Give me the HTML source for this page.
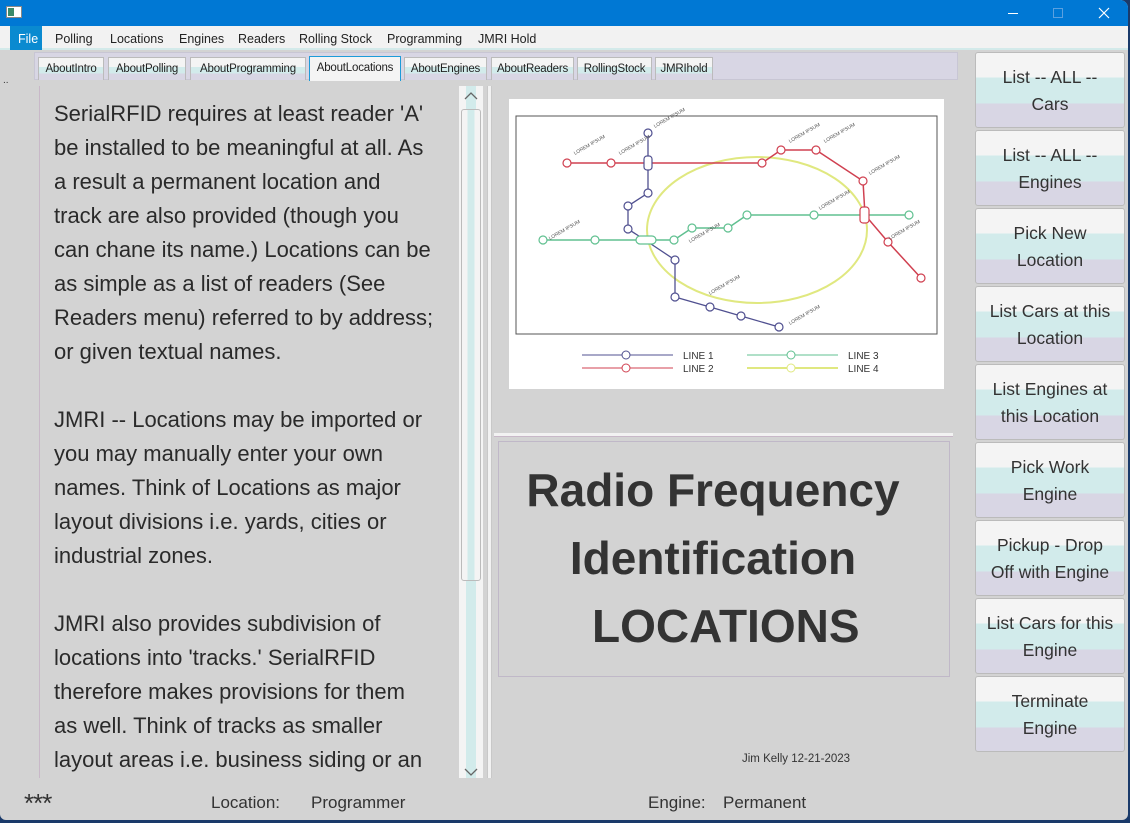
<!DOCTYPE html>
<html><head><meta charset="utf-8"><style>
*{margin:0;padding:0;box-sizing:border-box}
body{width:1130px;height:823px;overflow:hidden;background:#1a3a6a;font-family:"Liberation Sans",sans-serif;position:relative}
.win{position:absolute;left:0;top:0;width:1128px;height:820px;background:#d3d3d3;border-radius:0 8px 6px 6px;overflow:hidden}
.title{position:absolute;left:0;top:0;width:1130px;height:26px;background:#0078d4}
.menu{position:absolute;left:0;top:26px;width:1130px;height:24px;background:#f2f2f2;border-bottom:2px solid #d3eaea;font-size:12.5px;color:#222}
.menu span{position:absolute;top:6px}
.file{position:absolute;left:10px;top:0;width:32px;height:24px;background:#0a8ad0;color:#fff;font-size:12.5px;padding:6px 0 0 8px}
.tabs{position:absolute;left:34px;top:52px;width:924px;height:28px;background:#d8d6e4;border:1px solid #c8c6d4}
.tab{position:absolute;top:4px;height:23px;border:1px solid #bbb;border-bottom:none;background:linear-gradient(#f4f4f4 0,#f4f4f4 40%,#d2ebeb 40%,#d2ebeb 70%,#d8d6e4 70%);font-size:11.5px;letter-spacing:-0.2px;color:#222;padding:5px 0 0 0;text-align:center;white-space:nowrap;overflow:hidden}
.tab.sel{background:#f4f4f4;border:1px solid #1d9bd8;border-bottom:none;height:25px}
.txt{position:absolute;left:39px;top:86px;width:420px;height:692px;border-left:1px solid #c8b8c8;overflow:hidden}
.txt p{position:absolute;left:14px;top:11px;font-size:22px;line-height:34px;color:#2a2a2a;white-space:nowrap}
.sb{position:absolute;left:459px;top:86px;width:24px;height:692px;background:linear-gradient(90deg,#f4f4f4 0,#f4f4f4 30%,#d2ebeb 30%,#d2ebeb 70%,#f4f4f4 70%)}
.thumb{position:absolute;left:2px;top:23px;width:20px;height:472px;border:1px solid #bbb;border-radius:3px;background:linear-gradient(90deg,#f4f4f4 0,#f4f4f4 30%,#d2ebeb 30%,#d2ebeb 70%,#f4f4f4 70%)}
.btn{position:absolute;left:975px;width:150px;height:76px;border:1px solid #bbb;border-radius:3px;background:linear-gradient(#f4f4f4 0,#f4f4f4 33%,#d2ebeb 33%,#d2ebeb 68%,#d8d6e4 68%);font-size:17.5px;line-height:27px;color:#333;text-align:center;padding-top:11px}
.big{position:absolute;left:498px;top:441px;width:452px;height:236px;border:1px solid #c0b8c8;text-align:center;font-weight:bold;font-size:46px;line-height:68px;color:#333;padding-top:14px;padding-right:22px}
.st{position:absolute;top:793px;font-size:17px;color:#333}
</style></head><body>
<div class="win">
<div class="title">
<svg style="position:absolute;left:6px;top:6px" width="16" height="12"><rect x="0.5" y="0.5" width="15" height="11" fill="#fff" stroke="#888"/><rect x="2" y="2" width="6" height="8" fill="#3a8a6a"/></svg>
<div style="position:absolute;left:1008px;top:13px;width:10px;height:1px;background:#fff"></div>
<div style="position:absolute;left:1053px;top:8px;width:10px;height:10px;border:1px solid #5aa0e0"></div>
<svg style="position:absolute;left:1098px;top:7px" width="12" height="12"><path d="M1 1L11 11M11 1L1 11" stroke="#fff" stroke-width="1.2"/></svg>
</div>
<div class="menu"><div class="file">File</div>
<span style="left:55px">Polling</span><span style="left:110px">Locations</span><span style="left:179px">Engines</span><span style="left:238px">Readers</span><span style="left:299px">Rolling Stock</span><span style="left:387px">Programming</span><span style="left:478px">JMRI Hold</span></div>
<div style="position:absolute;left:3px;top:75px;font-size:10px;color:#333">..</div>
<div class="tabs">
<div class="tab" style="left:3px;width:66px">AboutIntro</div>
<div class="tab" style="left:73px;width:78px">AboutPolling</div>
<div class="tab" style="left:155px;width:116px">AboutProgramming</div>
<div class="tab sel" style="left:274px;width:92px;top:3px">AboutLocations</div>
<div class="tab" style="left:369px;width:83px">AboutEngines</div>
<div class="tab" style="left:456px;width:83px">AboutReaders</div>
<div class="tab" style="left:542px;width:75px">RollingStock</div>
<div class="tab" style="left:620px;width:58px">JMRIhold</div>
</div>
<div class="txt"><p>SerialRFID requires at least reader 'A'<br>be installed to be meaningful at all. As<br>a result a permanent location and<br>track are also provided (though you<br>can chane its name.) Locations can be<br>as simple as a list of readers (See<br>Readers menu) referred to by address;<br>or given textual names.<br><br>JMRI -- Locations may be imported or<br>you may manually enter your own<br>names. Think of Locations as major<br>layout divisions i.e. yards, cities or<br>industrial zones.<br><br>JMRI also provides subdivision of<br>locations into 'tracks.' SerialRFID<br>therefore makes provisions for them<br>as well. Think of tracks as smaller<br>layout areas i.e. business siding or an</p></div>
<div class="sb"><div class="thumb"></div>
<svg style="position:absolute;left:4px;top:4px" width="16" height="12"><path d="M2 9L8 3L14 9" stroke="#666" fill="none" stroke-width="1.3"/></svg>
<svg style="position:absolute;left:4px;top:680px" width="16" height="12"><path d="M2 3L8 9L14 3" stroke="#666" fill="none" stroke-width="1.3"/></svg></div>
<div style="position:absolute;left:487px;top:86px;width:5px;height:692px;background:#f2f2f2;border-left:1px solid #c8c8c8;border-right:1px solid #c8c8c8"></div>
<div style="position:absolute;left:494px;top:433px;width:459px;height:4px;background:#f2f2f2;border-bottom:1px solid #c8b8c8"></div>
<svg style="position:absolute;left:509px;top:99px" width="435" height="290" viewBox="509 99 435 290">
<rect x="509" y="99" width="435" height="290" fill="#fff"/>
<rect x="516" y="116" width="421" height="218" fill="none" stroke="#555" stroke-width="1"/>
<ellipse cx="757" cy="230" rx="110" ry="73" fill="none" stroke="#e0e880" stroke-width="2"/>
<path d="M567 163L762 163L781 150L816 150L863 181L865 215L888 242L921 278" fill="none" stroke="#d04050" stroke-width="1.5"/>
<path d="M648 133L648 193L628 206L628 229L645 240L675 260L675 297L710 307L741 316L779 327" fill="none" stroke="#505090" stroke-width="1.3"/>
<path d="M543 240L645 240L674 240L692 228L728 228L747 215L865 215L909 215" fill="none" stroke="#60c090" stroke-width="1.5"/>
<g fill="#fff" stroke-width="1.2">
<circle cx="567" cy="163" r="4" stroke="#d04050"/><circle cx="611" cy="163" r="4" stroke="#d04050"/><circle cx="762" cy="163" r="4" stroke="#d04050"/><circle cx="781" cy="150" r="4" stroke="#d04050"/><circle cx="816" cy="150" r="4" stroke="#d04050"/><circle cx="863" cy="181" r="4" stroke="#d04050"/><circle cx="888" cy="242" r="4" stroke="#d04050"/><circle cx="921" cy="278" r="4" stroke="#d04050"/>
<circle cx="648" cy="133" r="4" stroke="#505090"/><circle cx="648" cy="193" r="4" stroke="#505090"/><circle cx="628" cy="206" r="4" stroke="#505090"/><circle cx="628" cy="229" r="4" stroke="#505090"/><circle cx="675" cy="260" r="4" stroke="#505090"/><circle cx="675" cy="297" r="4" stroke="#505090"/><circle cx="710" cy="307" r="4" stroke="#505090"/><circle cx="741" cy="316" r="4" stroke="#505090"/><circle cx="779" cy="327" r="4" stroke="#505090"/>
<circle cx="543" cy="240" r="4" stroke="#60c090"/><circle cx="595" cy="240" r="4" stroke="#60c090"/><circle cx="674" cy="240" r="4" stroke="#60c090"/><circle cx="692" cy="228" r="4" stroke="#60c090"/><circle cx="728" cy="228" r="4" stroke="#60c090"/><circle cx="747" cy="215" r="4" stroke="#60c090"/><circle cx="814" cy="215" r="4" stroke="#60c090"/><circle cx="909" cy="215" r="4" stroke="#60c090"/>
<rect x="644" y="156" width="8" height="14" rx="3" stroke="#505090"/><rect x="636" y="236" width="20" height="8" rx="4" stroke="#60c090"/><rect x="860" y="207" width="9" height="16" rx="3" stroke="#d04050"/>
</g>
<g font-size="5" fill="#555" font-family="Liberation Sans"><text x="575" y="155" transform="rotate(-30 575 155)">LOREM IPSUM</text><text x="620" y="155" transform="rotate(-30 620 155)">LOREM IPSUM</text><text x="655" y="128" transform="rotate(-30 655 128)">LOREM IPSUM</text><text x="790" y="143" transform="rotate(-30 790 143)">LOREM IPSUM</text><text x="825" y="143" transform="rotate(-30 825 143)">LOREM IPSUM</text><text x="870" y="175" transform="rotate(-30 870 175)">LOREM IPSUM</text><text x="550" y="240" transform="rotate(-30 550 240)">LOREM IPSUM</text><text x="690" y="243" transform="rotate(-30 690 243)">LOREM IPSUM</text><text x="890" y="240" transform="rotate(-30 890 240)">LOREM IPSUM</text><text x="710" y="295" transform="rotate(-30 710 295)">LOREM IPSUM</text><text x="790" y="325" transform="rotate(-30 790 325)">LOREM IPSUM</text><text x="820" y="210" transform="rotate(-30 820 210)">LOREM IPSUM</text></g>
<path d="M582 355H673" stroke="#505090"/><path d="M582 368H673" stroke="#d04050"/>
<path d="M747 355H838" stroke="#60c090"/><path d="M747 368H838" stroke="#e0e880" stroke-width="2"/>
<circle cx="626" cy="355" r="4" fill="#fff" stroke="#505090"/><circle cx="626" cy="368" r="4" fill="#fff" stroke="#d04050"/><circle cx="791" cy="355" r="4" fill="#fff" stroke="#60c090"/><circle cx="791" cy="368" r="4" fill="#fff" stroke="#e0e880"/>
<g font-size="10" font-family="Liberation Sans" fill="#333"><text x="683" y="359">LINE 1</text><text x="683" y="372">LINE 2</text><text x="848" y="359">LINE 3</text><text x="848" y="372">LINE 4</text></g>
</svg>
<div class="big">Radio Frequency<br>Identification<br>&nbsp;&nbsp;LOCATIONS</div>
<div style="position:absolute;left:742px;top:753px;font-size:11.5px;color:#333">Jim Kelly 12-21-2023</div>
<div class="btn" style="top:52px">List -- ALL --<br>Cars</div>
<div class="btn" style="top:130px">List -- ALL --<br>Engines</div>
<div class="btn" style="top:208px">Pick New<br>Location</div>
<div class="btn" style="top:286px">List Cars at this<br>Location</div>
<div class="btn" style="top:364px">List Engines at<br>this Location</div>
<div class="btn" style="top:442px">Pick Work<br>Engine</div>
<div class="btn" style="top:520px">Pickup - Drop<br>Off with Engine</div>
<div class="btn" style="top:598px">List Cars for this<br>Engine</div>
<div class="btn" style="top:676px">Terminate<br>Engine</div>
<div class="st" style="left:24px;font-size:26px;top:788px;letter-spacing:-1px">***</div>
<div class="st" style="left:211px">Location:</div>
<div class="st" style="left:311px">Programmer</div>
<div class="st" style="left:648px">Engine:</div>
<div class="st" style="left:723px">Permanent</div>
</div>
</body></html>
